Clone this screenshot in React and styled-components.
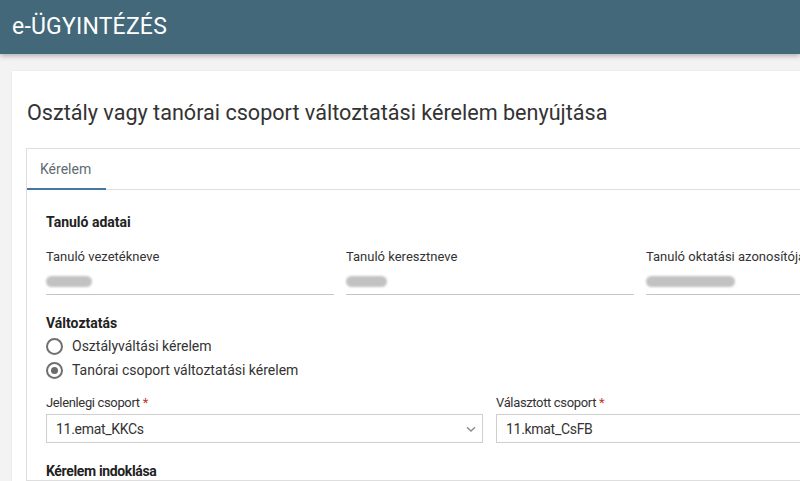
import React from "react";
import styled, { createGlobalStyle } from "styled-components";

const Global = createGlobalStyle`
  html, body { margin: 0; padding: 0; }
  body {
    background: #f3f3f3;
    font-family: Roboto, "Noto Sans", "Liberation Sans", sans-serif;
    color: #333;
    overflow: hidden;
    width: 800px;
    height: 481px;
  }
  * { box-sizing: border-box; }
`;

const Page = styled.div`
  width: 800px;
  height: 481px;
  overflow: hidden;
  display: flex;
  flex-direction: column;
`;

const Header = styled.header`
  height: 54px;
  flex: none;
  background: #43687a;
  display: flex;
  align-items: center;
  padding-left: 12px;
  box-shadow: 0 2px 5px rgba(0, 0, 0, 0.28);
  position: relative;
  z-index: 1;
`;

const Brand = styled.h1`
  margin: 0;
  font-size: 23px;
  font-weight: 400;
  color: #fff;
  letter-spacing: 0.2px;
  margin-top: -1px;
`;

const Main = styled.main`
  padding: 17px 0 0 12px;
  flex: 1;
  min-width: 0;
`;

const Card = styled.section`
  width: 1000px;
  background: #fff;
  padding: 28px 0 0 14px;
  min-height: 500px;
  box-shadow: 0 0 2px rgba(0, 0, 0, 0.08);
`;

const Title = styled.h2`
  margin: 0 0 21px 1px;
  font-size: 21.6px;
  font-weight: 400;
  color: #333;
  line-height: 28px;
`;

const Panel = styled.div`
  border: 1px solid #dedede;
  border-right: none;
`;

const TabBar = styled.div`
  display: flex;
  border-bottom: 1px solid #dedede;
  height: 41px;
`;

const Tab = styled.div`
  padding: 0 13px;
  display: flex;
  align-items: center;
  font-size: 14px;
  color: #5f6b73;
  border-bottom: 2px solid ${(p) => (p.$active ? "#4677a0" : "transparent")};
  margin-bottom: -1px;
  width: 79px;
`;

const Body = styled.div`
  padding: 23px 0 0 19px;
  width: 888px;
  box-sizing: content-box;
`;

const SectionTitle = styled.h3`
  margin: 0;
  font-size: 14px;
  font-weight: 700;
  color: #222;
  line-height: 18px;
  letter-spacing: ${(p) => (p.$condensed ? "-0.35px" : "0")};
`;

const FieldGrid = styled.div`
  display: grid;
  grid-template-columns: repeat(3, 288px);
  column-gap: 12px;
  margin-top: 17px;
`;

const Field = styled.div`
  display: flex;
  flex-direction: column;
`;

const Label = styled.label`
  font-size: 13px;
  line-height: 18px;
  color: #333;
  letter-spacing: ${(p) => (p.$condensed ? "-0.35px" : "0")};
`;

const Req = styled.span`
  color: #c0392b;
  margin-left: 3px;
`;

const ValueLine = styled.div`
  height: 29px;
  border-bottom: 1px solid #c4c4c4;
  position: relative;
`;

const Smudge = styled.div`
  position: absolute;
  left: 0;
  top: 10px;
  height: 11px;
  width: ${(p) => p.$w}px;
  background: #c2c2c2;
  border-radius: 6px;
  filter: blur(1.2px);
`;

const Group = styled.div`
  margin-top: 19px;
`;

const RadioList = styled.div`
  display: flex;
  flex-direction: column;
  gap: 6px;
  margin-top: 5px;
`;

const RadioRow = styled.label`
  display: flex;
  align-items: center;
  gap: 9px;
  font-size: 14px;
  color: #333;
  height: 18px;
`;

const RadioCircle = styled.span`
  width: 17px;
  height: 17px;
  border-radius: 50%;
  border: 2px solid #707070;
  display: flex;
  align-items: center;
  justify-content: center;
  flex: none;
  &::after {
    content: "";
    width: 7px;
    height: 7px;
    border-radius: 50%;
    background: ${(p) => (p.$checked ? "#6b6b6b" : "transparent")};
  }
`;

const SelectGrid = styled.div`
  display: grid;
  grid-template-columns: 437px 437px;
  column-gap: 13px;
  margin-top: 15px;
`;

const SelectBox = styled.div`
  margin-top: 2px;
  height: 29px;
  border: 1px solid #cfcfcf;
  display: flex;
  align-items: center;
  justify-content: space-between;
  padding: 0 5px 0 9px;
  font-size: 14px;
  color: #333;
  letter-spacing: -0.3px;
`;

const Chevron = styled.svg`
  width: 12px;
  height: 12px;
  flex: none;
`;

const FinalTitle = styled.div`
  margin-top: 19px;
`;

export default function App() {
  return (
    <>
      <Global />
      <Page>
        <Header>
          <Brand>e-ÜGYINTÉZÉS</Brand>
        </Header>
        <Main>
          <Card>
            <Title>Osztály vagy tanórai csoport változtatási kérelem benyújtása</Title>
            <Panel>
              <TabBar>
                <Tab $active>Kérelem</Tab>
              </TabBar>
              <Body>
                <SectionTitle>Tanuló adatai</SectionTitle>
                <FieldGrid>
                  <Field>
                    <Label>Tanuló vezetékneve</Label>
                    <ValueLine>
                      <Smudge $w={46} />
                    </ValueLine>
                  </Field>
                  <Field>
                    <Label>Tanuló keresztneve</Label>
                    <ValueLine>
                      <Smudge $w={41} />
                    </ValueLine>
                  </Field>
                  <Field>
                    <Label>Tanuló oktatási azonosítója</Label>
                    <ValueLine>
                      <Smudge $w={89} />
                    </ValueLine>
                  </Field>
                </FieldGrid>

                <Group>
                  <SectionTitle>Változtatás</SectionTitle>
                  <RadioList>
                    <RadioRow>
                      <RadioCircle />
                      Osztályváltási kérelem
                    </RadioRow>
                    <RadioRow>
                      <RadioCircle $checked />
                      Tanórai csoport változtatási kérelem
                    </RadioRow>
                  </RadioList>
                </Group>

                <SelectGrid>
                  <Field>
                    <Label $condensed>
                      Jelenlegi csoport<Req>*</Req>
                    </Label>
                    <SelectBox>
                      <span>11.emat_KKCs</span>
                      <Chevron viewBox="0 0 12 12">
                        <path d="M2 4.2 L6 8 L10 4.2" fill="none" stroke="#888" strokeWidth="1.3" />
                      </Chevron>
                    </SelectBox>
                  </Field>
                  <Field>
                    <Label $condensed>
                      Választott csoport<Req>*</Req>
                    </Label>
                    <SelectBox>
                      <span>11.kmat_CsFB</span>
                    </SelectBox>
                  </Field>
                </SelectGrid>

                <FinalTitle>
                  <SectionTitle $condensed>Kérelem indoklása</SectionTitle>
                </FinalTitle>
              </Body>
            </Panel>
          </Card>
        </Main>
      </Page>
    </>
  );
}
